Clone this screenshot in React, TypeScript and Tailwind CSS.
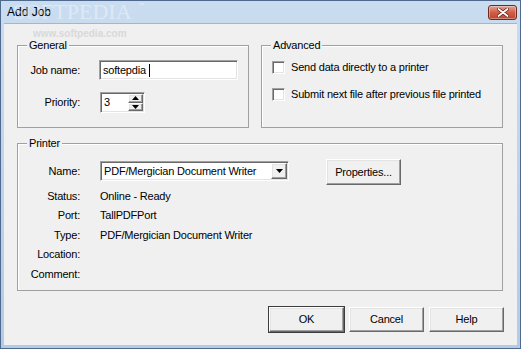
const raised =
  'bg-[#f0f0f0] border border-t-white border-l-white border-b-[#696969] border-r-[#696969] shadow-[inset_-1px_-1px_0_#a0a0a0,inset_1px_1px_0_#e3e3e3]';
const sunken =
  'bg-white border border-t-[#a0a0a0] border-l-[#a0a0a0] border-b-white border-r-white shadow-[inset_1px_1px_0_#696969,inset_-1px_-1px_0_#e3e3e3]';

const Triangle = ({ up = false }: { up?: boolean }) => (
  <svg width="7" height="4" viewBox="0 0 7 4" className="block">
    <polygon points={up ? '0,4 7,4 3.5,0' : '0,0 7,0 3.5,4'} fill="#000" />
  </svg>
);

const GroupBox = ({
  title,
  className,
  children,
}: {
  title: string;
  className: string;
  children: React.ReactNode;
}) => (
  <div className={`relative border border-[#a0a0a0] shadow-[inset_1px_1px_0_#ffffff] ${className}`}>
    {/* group caption sits on the top border */}
    <span className="absolute -top-[6px] left-[9px] bg-[#f0f0f0] px-[2px] leading-[11px]">{title}</span>
    {children}
  </div>
);

const Button = ({ label, isDefault = false }: { label: string; isDefault?: boolean }) => (
  <div
    className={`w-[75px] h-[25px] flex items-center justify-center ${raised} ${
      isDefault ? 'outline outline-1 outline-[#3c3c3c]' : ''
    }`}
  >
    {label}
  </div>
);

const Checkbox = ({ label }: { label: string }) => (
  <div className="flex items-center gap-[6px] h-[13px]">
    <div className={`w-[13px] h-[13px] ${sunken}`}></div>
    <span className="leading-[13px]">{label}</span>
  </div>
);

const printerInfo = [
  { label: 'Status:', value: 'Online - Ready' },
  { label: 'Port:', value: 'TallPDFPort' },
  { label: 'Type:', value: 'PDF/Mergician Document Writer' },
  { label: 'Location:', value: '' },
  { label: 'Comment:', value: '' },
];

export default function App() {
  return (
    <div className="relative w-[521px] h-[349px] bg-[#4f6a8c] p-px font-['Liberation_Sans',Arial,sans-serif] text-[11px] tracking-[-0.2px] text-black select-none overflow-hidden">
      <div className="w-full h-full flex flex-col bg-gradient-to-b from-[#cadcf0] to-[#b3cbe7]">
        {/* Title bar */}
        <div className="h-[22px] flex items-center justify-between pl-[6px] pr-[3px]">
          <span className="text-[12px] tracking-normal leading-none">Add Job</span>
          <div className="w-[29px] h-[15px] rounded-[3px] border border-[#6e2a1e] bg-gradient-to-b from-[#e3a394] via-[#cf5e48] to-[#c0442c] flex items-center justify-center shadow-[inset_0_0_0_1px_rgba(255,255,255,0.35)]">
            <svg width="12" height="9" viewBox="0 0 12 9">
              <path d="M1.5 1 L10.5 8 M10.5 1 L1.5 8" stroke="#5a1a10" strokeWidth="3.2" strokeLinecap="round" />
              <path d="M1.5 1 L10.5 8 M10.5 1 L1.5 8" stroke="#ffffff" strokeWidth="1.8" strokeLinecap="round" />
            </svg>
          </div>
        </div>

        {/* Client area */}
        <div className="mx-[3px] mb-[3px] flex-1 bg-[#f0f0f0] border-t border-[#9fb7d3] px-[13px] pt-[21px] flex flex-col">
          <div className="flex gap-[12px]">
            <GroupBox title="General" className="w-[232px] h-[83px]">
              <div className="flex flex-col pt-[14px]">
                <div className="flex items-center h-[20px]">
                  <span className="w-[62px] text-right">Job name:</span>
                  <div className={`ml-[19px] w-[139px] h-[20px] flex items-center pl-[3px] ${sunken}`}>
                    <span>softepdia</span>
                    <span className="ml-[3px] w-px h-[13px] bg-black"></span>
                  </div>
                </div>
                <div className="flex items-center h-[21px] mt-[12px]">
                  <span className="w-[62px] text-right">Priority:</span>
                  <div className={`ml-[20px] w-[45px] h-[21px] flex items-center justify-between pl-[3px] pr-[1px] ${sunken}`}>
                    <span>3</span>
                    <div className="flex flex-col w-[15px] h-[17px]">
                      <div className={`flex-1 flex items-center justify-center ${raised}`}>
                        <Triangle up />
                      </div>
                      <div className={`flex-1 flex items-center justify-center ${raised}`}>
                        <Triangle />
                      </div>
                    </div>
                  </div>
                </div>
              </div>
            </GroupBox>

            <GroupBox title="Advanced" className="w-[242px] h-[83px]">
              <div className="flex flex-col pl-[10px] pt-[15px] gap-[14px]">
                <Checkbox label="Send data directly to a printer" />
                <Checkbox label="Submit next file after previous file printed" />
              </div>
            </GroupBox>
          </div>

          <GroupBox title="Printer" className="mt-[15px] w-[486px] h-[148px]">
            <div className="flex items-start pt-[15px]">
              <div className="w-[271px] pt-[2px] flex flex-col">
                <div className="flex items-center h-[20px]">
                  <span className="w-[62px] text-right">Name:</span>
                  <div className={`ml-[20px] w-[189px] h-[20px] flex items-center justify-between pl-[3px] pr-px ${sunken}`}>
                    <span>PDF/Mergician Document Writer</span>
                    <div className={`w-[16px] h-[16px] flex items-center justify-center ${raised}`}>
                      <Triangle />
                    </div>
                  </div>
                </div>
                <div className="flex flex-col mt-[5px]">
                  {printerInfo.map((row) => (
                    <div key={row.label} className="flex items-center h-[19.5px]">
                      <span className="w-[62px] text-right">{row.label}</span>
                      <span className="ml-[20px]">{row.value}</span>
                    </div>
                  ))}
                </div>
              </div>
              <div className={`ml-[37px] w-[75px] h-[26px] flex items-center justify-center ${raised}`}>
                Properties...
              </div>
            </div>
          </GroupBox>

          <div className="mt-[16px] flex justify-end gap-[5px]">
            <Button label="OK" isDefault />
            <Button label="Cancel" />
            <Button label="Help" />
          </div>
        </div>
      </div>

      {/* softpedia watermarks */}
      <span className="absolute left-[13px] top-[1px] leading-[22px] font-['Liberation_Serif',serif] text-[22px] tracking-normal text-white/40 pointer-events-none">
        SOFTPEDIA
      </span>
      <span className="absolute left-[138px] top-[2px] leading-none text-[6px] text-white/50 pointer-events-none">™</span>
      <span className="absolute left-[33px] top-[29px] leading-none text-[10px] tracking-normal font-bold text-[#d9d9d9] pointer-events-none">
        www.softpedia.com
      </span>
    </div>
  );
}
